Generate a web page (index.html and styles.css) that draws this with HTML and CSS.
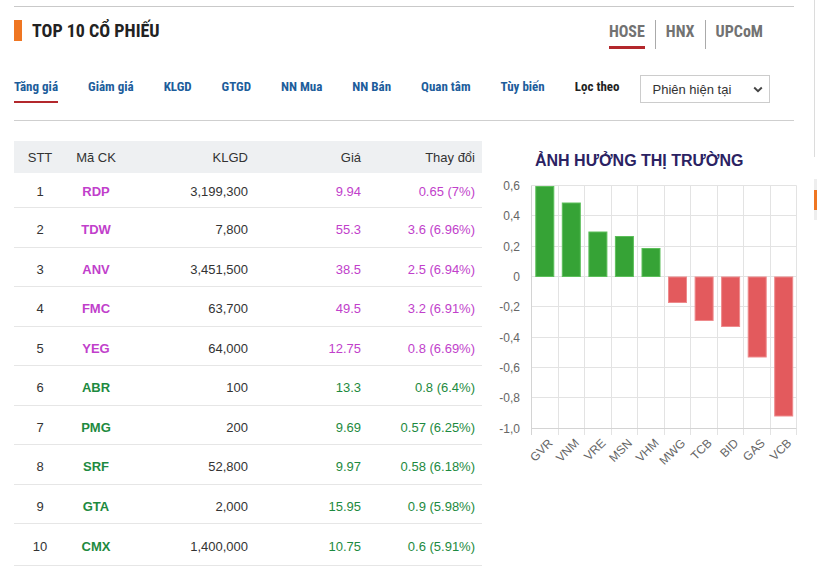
FILE: index.html
```html
<!DOCTYPE html>
<html lang="vi">
<head>
<meta charset="utf-8">
<title>Top 10 cổ phiếu</title>
<link rel="stylesheet" href="styles.css">
</head>
<body>
<div class="page">
  <div class="main">
    <div class="head">
      <div class="title"><span class="title-bar"></span><h2>TOP 10 CỔ PHIẾU</h2></div>
      <nav class="exchanges">
        <a class="ex active">HOSE</a><span class="sep"></span><a class="ex">HNX</a><span class="sep"></span><a class="ex">UPCoM</a>
      </nav>
    </div>
    <div class="tabs">
      <a class="tab active">Tăng giá</a>
      <a class="tab">Giảm giá</a>
      <a class="tab">KLGD</a>
      <a class="tab">GTGD</a>
      <a class="tab">NN Mua</a>
      <a class="tab">NN Bán</a>
      <a class="tab">Quan tâm</a>
      <a class="tab">Tùy biến</a>
      <span class="filter-label">Lọc theo</span>
      <div class="select"><span>Phiên hiện tại</span>
        <svg class="chev" width="10" height="7" viewBox="0 0 10 7"><path d="M1.2 1.5 L5 5.2 L8.8 1.5" fill="none" stroke="#444" stroke-width="1.9"/></svg>
      </div>
    </div>
    <div class="content">
      <div class="stocks">
        <div class="row hdr"><span class="c">STT</span><span class="c">Mã CK</span><span class="r">KLGD</span><span class="r">Giá</span><span class="r">Thay đổi</span></div>
        <div class="row ceil"><span class="c">1</span><span class="c sym">RDP</span><span class="r vol">3,199,300</span><span class="r">9.94</span><span class="r">0.65 (7%)</span></div>
        <div class="row ceil"><span class="c">2</span><span class="c sym">TDW</span><span class="r vol">7,800</span><span class="r">55.3</span><span class="r">3.6 (6.96%)</span></div>
        <div class="row ceil"><span class="c">3</span><span class="c sym">ANV</span><span class="r vol">3,451,500</span><span class="r">38.5</span><span class="r">2.5 (6.94%)</span></div>
        <div class="row ceil"><span class="c">4</span><span class="c sym">FMC</span><span class="r vol">63,700</span><span class="r">49.5</span><span class="r">3.2 (6.91%)</span></div>
        <div class="row ceil"><span class="c">5</span><span class="c sym">YEG</span><span class="r vol">64,000</span><span class="r">12.75</span><span class="r">0.8 (6.69%)</span></div>
        <div class="row up"><span class="c">6</span><span class="c sym">ABR</span><span class="r vol">100</span><span class="r">13.3</span><span class="r">0.8 (6.4%)</span></div>
        <div class="row up"><span class="c">7</span><span class="c sym">PMG</span><span class="r vol">200</span><span class="r">9.69</span><span class="r">0.57 (6.25%)</span></div>
        <div class="row up"><span class="c">8</span><span class="c sym">SRF</span><span class="r vol">52,800</span><span class="r">9.97</span><span class="r">0.58 (6.18%)</span></div>
        <div class="row up"><span class="c">9</span><span class="c sym">GTA</span><span class="r vol">2,000</span><span class="r">15.95</span><span class="r">0.9 (5.98%)</span></div>
        <div class="row up"><span class="c">10</span><span class="c sym">CMX</span><span class="r vol">1,400,000</span><span class="r">10.75</span><span class="r">0.6 (5.91%)</span></div>
      </div>
      <div class="chart">
        <h3>ẢNH HƯỞNG THỊ TRƯỜNG</h3>
        <svg class="plot" width="330" height="300" viewBox="0 0 330 300">
          <g stroke="#e3e3e3" stroke-width="1">
            <line x1="49.5" y1="14.5" x2="314.5" y2="14.5"/>
            <line x1="49.5" y1="44.5" x2="314.5" y2="44.5"/>
            <line x1="49.5" y1="75.5" x2="314.5" y2="75.5"/>
            <line x1="49.5" y1="105.5" x2="314.5" y2="105.5"/>
            <line x1="49.5" y1="135.5" x2="314.5" y2="135.5"/>
            <line x1="49.5" y1="166.5" x2="314.5" y2="166.5"/>
            <line x1="49.5" y1="196.5" x2="314.5" y2="196.5"/>
            <line x1="49.5" y1="226.5" x2="314.5" y2="226.5"/>
            <line x1="76.5" y1="14.5" x2="76.5" y2="264"/>
            <line x1="102.5" y1="14.5" x2="102.5" y2="264"/>
            <line x1="129.5" y1="14.5" x2="129.5" y2="264"/>
            <line x1="155.5" y1="14.5" x2="155.5" y2="264"/>
            <line x1="182.5" y1="14.5" x2="182.5" y2="264"/>
            <line x1="208.5" y1="14.5" x2="208.5" y2="264"/>
            <line x1="235.5" y1="14.5" x2="235.5" y2="264"/>
            <line x1="261.5" y1="14.5" x2="261.5" y2="264"/>
            <line x1="288.5" y1="14.5" x2="288.5" y2="264"/>
            <line x1="314.5" y1="14.5" x2="314.5" y2="264"/>
          </g>
          <g stroke="#d4d4d4" stroke-width="1">
            <line x1="49.5" y1="14.5" x2="49.5" y2="264"/>
            <line x1="49.5" y1="257.5" x2="314.5" y2="257.5"/>
          </g>
          <g class="ylab" text-anchor="end">
            <text x="38" y="18.8">0,6</text>
            <text x="38" y="48.8">0,4</text>
            <text x="38" y="79.8">0,2</text>
            <text x="38" y="109.8">0</text>
            <text x="38" y="139.8">-0,2</text>
            <text x="38" y="170.8">-0,4</text>
            <text x="38" y="200.8">-0,6</text>
            <text x="38" y="230.8">-0,8</text>
            <text x="38" y="261.8">-1,0</text>
          </g>
          <g class="bars-up" fill="#36a336" stroke="#5cbf5a" stroke-width="1">
            <rect x="53.8" y="15.5" width="18" height="90"/>
            <rect x="80.3" y="32" width="18" height="73.5"/>
            <rect x="106.9" y="61" width="18" height="44.5"/>
            <rect x="133.4" y="65.5" width="18" height="40"/>
            <rect x="160" y="77.5" width="18" height="28"/>
          </g>
          <g class="bars-down" fill="#e35a5d" stroke="#ee8a8c" stroke-width="1">
            <rect x="186.5" y="106" width="18" height="25.5"/>
            <rect x="213.1" y="106" width="18" height="43.5"/>
            <rect x="239.6" y="106" width="18" height="49.5"/>
            <rect x="266.2" y="106" width="18" height="80"/>
            <rect x="292.7" y="106" width="18" height="139"/>
          </g>
          <g class="xlab" text-anchor="end">
            <text transform="translate(71.3 272.8) rotate(-45)">GVR</text>
            <text transform="translate(97.8 272.8) rotate(-45)">VNM</text>
            <text transform="translate(124.4 272.8) rotate(-45)">VRE</text>
            <text transform="translate(150.9 272.8) rotate(-45)">MSN</text>
            <text transform="translate(177.5 272.8) rotate(-45)">VHM</text>
            <text transform="translate(204 272.8) rotate(-45)">MWG</text>
            <text transform="translate(230.6 272.8) rotate(-45)">TCB</text>
            <text transform="translate(257.1 272.8) rotate(-45)">BID</text>
            <text transform="translate(283.7 272.8) rotate(-45)">GAS</text>
            <text transform="translate(310.2 272.8) rotate(-45)">VCB</text>
          </g>
        </svg>
      </div>
    </div>
  </div>
  <aside class="side">
    <div class="side-line"></div>
    <div class="side-box"><span class="side-mark"></span></div>
  </aside>
</div>
</body>
</html>
```
FILE: styles.css
```css
* { box-sizing: border-box; }
html, body { margin: 0; padding: 0; background: #fff; }
body {
  font-family: "Liberation Sans", Arial, sans-serif;
  color: #333;
  width: 817px;
  height: 583px;
  overflow: hidden;
}
.page { display: flex; align-items: flex-start; }
.main { width: 780px; margin-left: 14px; flex: none; }

/* header */
.head {
  margin-top: 6px;
  border-top: 1px solid #c9c9c9;
  height: 43px;
  display: flex;
  justify-content: space-between;
  align-items: flex-start;
  padding-right: 31px;
}
.title { display: flex; align-items: center; margin-top: 12px; }
.title-bar { width: 8px; height: 21px; background: #ef7622; }
.title h2 {
  margin: 1px 0 0 10px;
  font-family: "Roboto Condensed", "Liberation Sans Narrow", "DejaVu Sans Condensed", Roboto, sans-serif;
  font-weight: 700;
  font-size: 18px;
  line-height: 21px;
  color: #222;
}
.exchanges { display: flex; align-items: stretch; margin-top: 13px; height: 29px; }
.ex {
  font-family: "Roboto Condensed", "Liberation Sans Narrow", "DejaVu Sans Condensed", Roboto, sans-serif;
  font-weight: 700;
  font-size: 16px;
  color: #727272;
  line-height: 24px;
  border-bottom: 3px solid transparent;
}
.ex.active { border-bottom-color: #b3282c; }
.sep { width: 1px; background: #aaa; margin: 0 10px; }

/* tabs */
.tabs {
  display: flex;
  align-items: flex-start;
  padding-top: 26px;
  padding-bottom: 17px;
  border-bottom: 1px solid #cfcfcf;
}
.tab, .filter-label {
  font-family: "Roboto Condensed", "Liberation Sans Narrow", "DejaVu Sans Condensed", Roboto, sans-serif;
  font-weight: 700;
  font-size: 13px;
  line-height: 20px;
  margin-top: 2px;
  padding-bottom: 4px;
  border-bottom: 2px solid transparent;
  margin-right: 30px;
  color: #1d5d9b;
}
.tab.active { border-bottom-color: #b3282c; }
.filter-label { color: #222; margin-right: 20px; }
.select {
  width: 130px;
  height: 28px;
  border: 1px solid #cccccc;
  display: flex;
  align-items: center;
  justify-content: space-between;
  padding: 0 6px 0 12px;
  font-size: 13px;
  color: #333;
}
.chev { display: block; }

/* content */
.content { display: flex; align-items: flex-start; margin-top: 20px; }
.stocks { width: 468px; flex: none; font-size: 13px; }
.row {
  display: grid;
  grid-template-columns: 52px 60px 129px 113px 114px;
  align-items: center;
  height: 39.5px;
  border-bottom: 1px solid #e6e6e6;
  padding-top: 5px;
}
.row.hdr { background: #eef0f2; height: 32px; border-bottom: none; padding-top: 0; }
.row.hdr + .row { height: 35px; padding-top: 2px; }
.row:last-child { height: 41.5px; }
.row .c { text-align: center; }
.row .r { text-align: right; padding-right: 7px; }
.row .vol { color: #333; }
.row.ceil .sym, .row.ceil .r:not(.vol) { color: #c13fcb; }
.row.up .sym, .row.up .r:not(.vol) { color: #1d8a40; }
.sym { font-weight: 700; }

/* chart */
.chart { flex: none; width: 330px; }
.chart h3 {
  margin: 10px 0 0 53px;
  font-size: 16px;
  line-height: 20px;
  font-weight: 700;
  color: #2b2262;
}
.plot { display: block; overflow: visible; }
.ylab text, .xlab text {
  font-family: "Liberation Sans", Arial, sans-serif;
  font-size: 12px;
  fill: #666;
}

/* right edge sidebar */
.side { margin-left: 20px; width: 3px; flex: none; }
.side-line { height: 157px; border-left: 1px solid #dcdcdc; }
.side-box { margin-top: 22px; height: 41px; background: #eeeeee; padding-top: 11px; }
.side-mark { display: block; height: 20px; background: #ef7622; }
```
